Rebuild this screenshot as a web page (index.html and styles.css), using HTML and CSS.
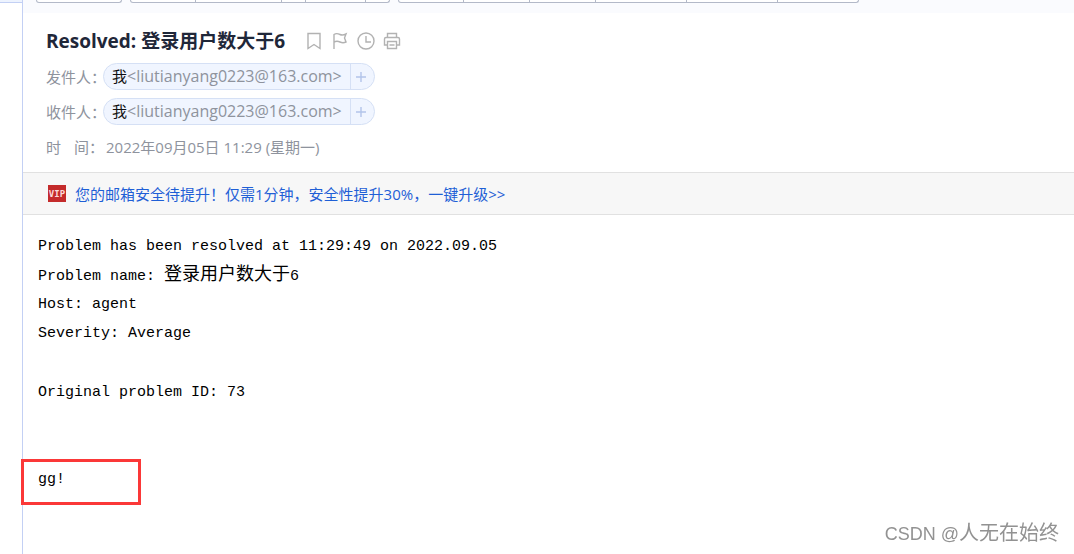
FILE: index.html
```
<!DOCTYPE html>
<html lang="zh-CN">
<head>
    <meta charset="UTF-8">
    <meta name="viewport" content="width=device-width, initial-scale=1.0">
    <title>Resolved: 登录用户数大于6</title>
    <link rel="stylesheet" href="styles.css">
</head>
<body>
<div class="layout">
    <aside class="sidebar">
        <div class="sidebar_tab"></div>
    </aside>
    <main class="mail">
        <div class="toolbar">
            <div class="btn_group">
                <button type="button" class="w84"></button>
            </div>
            <div class="btn_group">
                <button type="button" class="w64"></button>
                <button type="button" class="w86"></button>
                <button type="button" class="w24"></button>
                <button type="button" class="w60"></button>
                <button type="button" class="w24"></button>
            </div>
            <div class="btn_group">
                <button type="button" class="w64"></button>
                <button type="button" class="w66"></button>
                <button type="button" class="w66"></button>
                <button type="button" class="w91"></button>
                <button type="button" class="w91"></button>
                <button type="button" class="w81"></button>
            </div>
        </div>

        <header class="mail_header">
            <div class="title_row">
                <h1>Resolved: 登录用户数大于6</h1>
                <div class="title_icons">
                    <button type="button">
                        <svg width="18" height="18" viewBox="0 0 18 18"><path d="M3 1.500h12v15l-6-4-6 4z"/></svg>
                    </button>
                    <button type="button">
                        <svg width="18" height="18" viewBox="0 0 18 18"><path d="M3 17V2.500c2-1.500 4-1 6 0s4 .5 6-.5l-1.500 4L15 10c-2 1-4 1-6 0s-4-1-6 0"/></svg>
                    </button>
                    <button type="button">
                        <svg width="18" height="18" viewBox="0 0 18 18"><circle cx="9" cy="9" r="8"/><path d="M9 4v6h5"/></svg>
                    </button>
                    <button type="button">
                        <svg width="18" height="18" viewBox="0 0 18 18"><path d="M4.500 5.500v-4h9v4M4.500 13h-3V7q0-1.500 1.500-1.500h12q1.500 0 1.500 1.500v6h-3"/><path d="M4.500 9.500h9v7h-9zM6.500 13h5"/></svg>
                    </button>
                </div>
            </div>
            <div class="info_row">
                <span class="info_label">发件人：</span>
                <div class="contact">
                    <span class="contact_name"><b>我</b>&lt;liutianyang0223@163.com&gt;</span>
                    <button type="button" class="contact_add"><svg width="10" height="10" viewBox="0 0 10 10"><path d="M5 0v10M0 5h10"/></svg></button>
                </div>
            </div>
            <div class="info_row">
                <span class="info_label">收件人：</span>
                <div class="contact">
                    <span class="contact_name"><b>我</b>&lt;liutianyang0223@163.com&gt;</span>
                    <button type="button" class="contact_add"><svg width="10" height="10" viewBox="0 0 10 10"><path d="M5 0v10M0 5h10"/></svg></button>
                </div>
            </div>
            <div class="info_row">
                <span class="info_label spread"><span>时</span><span>间：</span></span>
                <span class="date">2022年09月05日 11:29 (星期一)</span>
            </div>
        </header>

        <div class="notice">
            <span class="vip">VIP</span>
            <a href="#">您的邮箱安全待提升！仅需1分钟，安全性提升30%，一键升级&gt;&gt;</a>
        </div>

        <article class="content">
            <p>Problem has been resolved at 11:29:49 on 2022.09.05</p>
            <p>Problem name: <span class="zh">登录用户数大于</span>6</p>
            <p>Host: agent</p>
            <p>Severity: Average</p>
            <p class="original">Original problem ID: 73</p>
            <p class="signature">gg!<span class="mark"></span></p>
        </article>
    </main>
</div>
<div class="watermark">CSDN @<span class="author">人无在始终</span></div>
</body>
</html>
```
FILE: styles.css
```
:root {
    --line: #c3d0f4;
    --btn-line: #b3b9c8;
    --muted: #8e939d;
    --icon: #b2b2b2;
    --link: #1f5fd6;
    --chip-bg: #f0f5ff;
    --chip-line: #d5e0f5;
}

* {
    margin: 0;
    padding: 0;
    box-sizing: border-box;
}

body {
    background: #fff;
    font-family: "Open Sans", "Noto Sans CJK SC", sans-serif;
    font-size: 15px;
}

button {
    background: none;
    border: 0;
    cursor: pointer;
}

svg {
    display: block;
    fill: none;
    stroke: var(--icon);
    stroke-width: 1.4;
}

.layout {
    display: flex;
    min-height: 100vh;
}

.sidebar {
    flex: 0 0 23px;
    border-right: 1px solid var(--line);
}

.sidebar_tab {
    height: 3px;
    background: #edf3fe;
    border-bottom: 1px solid var(--line);
}

.mail {
    flex: 1;
    min-width: 0;
}

/* toolbar */
.toolbar {
    display: flex;
    gap: 8px;
    height: 13px;
    padding-left: 13px;
    background: #fafbfe;
}

.btn_group {
    display: flex;
    height: 3px;
    background: #fff;
    border: 1px solid var(--btn-line);
    border-top: 0;
    border-radius: 0 0 4px 4px;
}

.btn_group button + button {
    border-left: 1px solid var(--btn-line);
}

.w24 { width: 24px; }
.w60 { width: 60px; }
.w64 { width: 64px; }
.w66 { width: 66px; }
.w81 { width: 81px; }
.w84 { width: 84px; }
.w86 { width: 86px; }
.w91 { width: 91px; }

/* subject and addresses */
.mail_header {
    display: flex;
    flex-direction: column;
    gap: 8px;
    padding: 14px 23px 12px;
}

.title_row {
    display: flex;
    align-items: center;
    gap: 20px;
    height: 28px;
}

.title_row h1 {
    color: #1f2739;
    font-size: 19px;
    font-weight: 700;
    line-height: 28px;
}

.title_icons {
    display: flex;
    gap: 8px;
}

.info_row {
    display: flex;
    align-items: center;
    height: 27px;
    color: var(--muted);
}

.info_label {
    width: 60px;
    margin-right: -3px;
    white-space: nowrap;
}

.spread {
    display: flex;
    gap: 13px;
    margin-right: 0;
}

.contact {
    display: flex;
    align-items: center;
    height: 27px;
    background: var(--chip-bg);
    border: 1px solid var(--chip-line);
    border-radius: 14px;
}

.contact_name {
    padding: 0 8px;
    font-size: 16px;
    line-height: 25px;
}

.contact_name b {
    color: #111;
    font-size: 15px;
    font-weight: 400;
}

.contact_add {
    height: 25px;
    padding: 0 8px 0 5px;
    border-left: 1px solid var(--chip-line);
}

.contact_add svg {
    stroke: #b2c4ea;
}

/* upgrade notice */
.notice {
    display: flex;
    align-items: center;
    gap: 9px;
    height: 43px;
    padding-left: 25px;
    background: #f7f7f7;
    border: 1px solid #e1e1e1;
    border-width: 1px 0;
}

.notice a {
    color: var(--link);
    text-decoration: none;
}

.vip {
    width: 18px;
    height: 17px;
    background: #c42b2b;
    color: #fbdada;
    font: bold 9px/19px "DejaVu Sans Mono", monospace;
    text-align: center;
}

/* message body */
.content {
    padding: 17px 15px;
    color: #000;
    font-family: "Liberation Mono", "Noto Sans CJK SC", monospace;
    line-height: 29px;
}

.content p {
    height: 29px;
}

.content .zh {
    font-size: 18px;
}

.content .original {
    margin-top: 30px;
}

.content .signature {
    position: relative;
    margin-top: 58px;
}

.mark {
    position: absolute;
    top: -6px;
    left: -17px;
    width: 120px;
    height: 46px;
    border: 3px solid #fb3838;
}

.watermark {
    position: fixed;
    right: 15px;
    bottom: 6px;
    color: #929292;
    font: 18px/28px "Liberation Sans", "Noto Sans CJK SC", sans-serif;
}

.author {
    font-size: 20px;
}
```
